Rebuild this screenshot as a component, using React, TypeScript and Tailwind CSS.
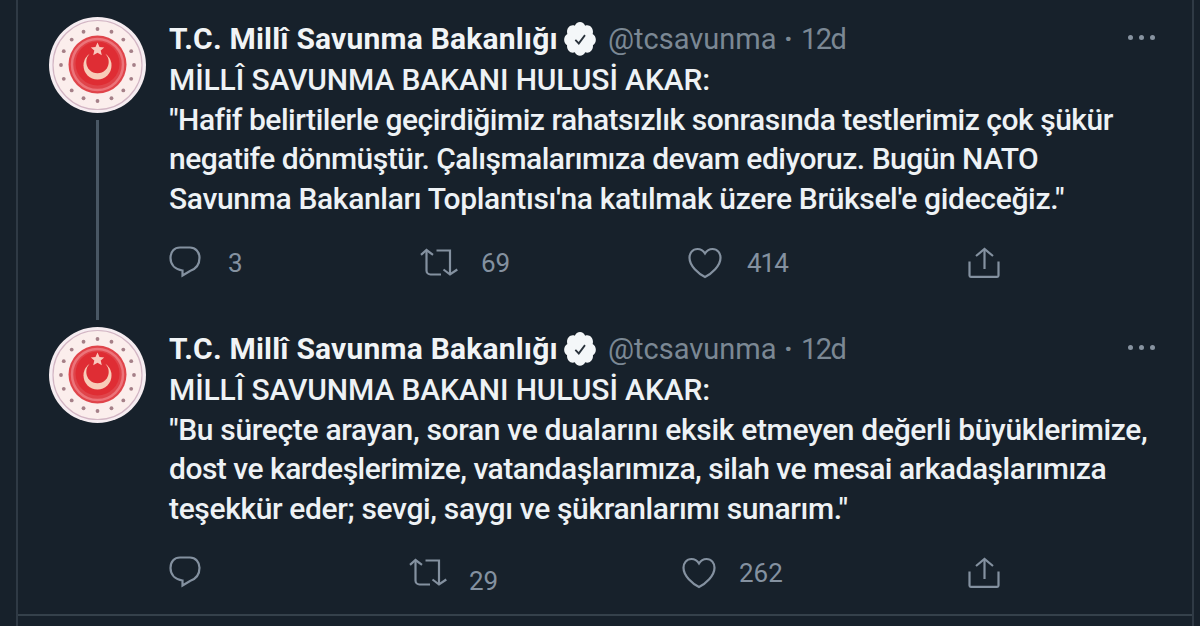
interface Line {
  text: string;
  className: string;
}

interface Tweet {
  lines: Line[];
  replies: string;
  retweets: string;
  likes: string;
  threaded: boolean;
  retweetCol: string;
  retweetCount: string;
  likeCol: string;
  likeCount: string;
}

const tweets: Tweet[] = [
  {
    lines: [
      { text: "MİLLÎ SAVUNMA BAKANI HULUSİ AKAR:", className: "tracking-[-0.11px]" },
      { text: "\"Hafif belirtilerle geçirdiğimiz rahatsızlık sonrasında testlerimiz çok şükür", className: "tracking-[-0.48px]" },
      { text: "negatife dönmüştür. Çalışmalarımıza devam ediyoruz. Bugün NATO", className: "tracking-[-0.5px]" },
      { text: "Savunma Bakanları Toplantısı'na katılmak üzere Brüksel'e gideceğiz.\"", className: "tracking-[-0.34px]" },
    ],
    replies: "3",
    retweets: "69",
    likes: "414",
    threaded: true,
    retweetCol: "w-[251px]",
    retweetCount: "ml-[22px] mt-[4px]",
    likeCol: "w-[268px]",
    likeCount: "ml-[25px] tracking-[-1px]",
  },
  {
    lines: [
      { text: "MİLLÎ SAVUNMA BAKANI HULUSİ AKAR:", className: "tracking-[-0.11px]" },
      { text: "\"Bu süreçte arayan, soran ve dualarını eksik etmeyen değerli büyüklerimize,", className: "tracking-[-0.33px]" },
      { text: "dost ve kardeşlerimize, vatandaşlarımıza, silah ve mesai arkadaşlarımıza", className: "tracking-[-0.5px]" },
      { text: "teşekkür eder; sevgi, saygı ve şükranlarımı sunarım.\"", className: "tracking-[-0.36px]" },
    ],
    replies: "",
    retweets: "29",
    likes: "262",
    threaded: false,
    retweetCol: "w-[240px]",
    retweetCount: "ml-[21px] mt-[12px]",
    likeCol: "w-[273px]",
    likeCount: "ml-[23px]",
  },
];

const STAR_COUNT = 16;

function Emblem() {
  const stars = Array.from({ length: STAR_COUNT }, (_, i) => {
    const angle = (i / STAR_COUNT) * Math.PI * 2;
    return { x: 48.5 + Math.sin(angle) * 36.5, y: 48 - Math.cos(angle) * 36 };
  });

  return (
    <svg width="97" height="96" viewBox="0 0 97 96" className="block shrink-0">
      <ellipse cx="48.5" cy="48" rx="48.5" ry="48" fill="#f6edf1" />
      <circle cx="48.5" cy="48" r="44.5" fill="#fbeeec" stroke="#d3b6c4" strokeWidth="1.2" />
      {stars.map((s, i) => (
        <circle key={i} cx={s.x} cy={s.y} r="1.9" fill="#a58088" />
      ))}
      <circle cx="48.5" cy="47.5" r="29" fill="#e0444a" />
      <circle cx="48.5" cy="47.5" r="25.5" fill="none" stroke="#ec747a" strokeWidth="2.5" />
      <circle cx="48.5" cy="46.5" r="22" fill="#df2d34" />
      {/* Crescent: light disc with a smaller red disc cut out of its top */}
      <circle cx="48.5" cy="48.5" r="14" fill="#f8cdb9" />
      <circle cx="48.5" cy="45" r="11.2" fill="#df2d34" />
      <path d="M39 30h19l-1.500 8h-16z" fill="#df2d34" />
      <path d="M48.5 25.5l2 4.4 4.7.5-3.5 3.2 1.1 4.7-4.3-2.5-4.3 2.5 1.1-4.7-3.5-3.2 4.7-.5z" fill="#f9c9bd" />
    </svg>
  );
}

function VerifiedBadge() {
  return (
    <svg width="32" height="35" viewBox="1.4 1.5 21.2 21.7" preserveAspectRatio="none" className="block">
      <path
        fill="#f4f7f9"
        d="M22.5 12.5c0-1.58-.875-2.95-2.148-3.6.154-.435.238-.905.238-1.4 0-2.21-1.71-3.998-3.818-3.998-.47 0-.92.084-1.336.25C14.818 2.415 13.51 1.5 12 1.5s-2.816.917-3.437 2.25c-.415-.165-.866-.25-1.336-.25-2.11 0-3.818 1.79-3.818 4 0 .494.083.964.237 1.4-1.272.65-2.147 2.018-2.147 3.6 0 1.495.782 2.798 1.942 3.486-.02.17-.032.34-.032.514 0 2.21 1.708 4 3.818 4 .47 0 .92-.086 1.335-.25.62 1.334 1.926 2.25 3.437 2.25 1.512 0 2.818-.916 3.437-2.25.415.163.865.248 1.336.248 2.11 0 3.818-1.79 3.818-4 0-.174-.012-.344-.033-.513 1.158-.687 1.943-1.99 1.943-3.484z"
      />
      <path d="M8.9 12.6l2.3 2.2 4.1-5.2" fill="none" stroke="#29323b" strokeWidth="1.2" />
    </svg>
  );
}

function ReplyIcon() {
  return (
    <svg width="32" height="32" viewBox="0 0 32 32" fill="none" stroke="currentColor" strokeWidth="2.2" className="block">
      <path d="M11 1.5h10c5.5 0 9.5 4.500 9.500 10.300 0 6.700-3.500 11.200-9.500 13.200l-7.500 4.500V24.500C6.500 23.500 1.500 19 1.500 12 1.500 5.500 5.500 1.500 11 1.500z" />
    </svg>
  );
}

function RetweetIcon() {
  return (
    <svg width="39" height="32" viewBox="0 0 39 32" fill="none" stroke="currentColor" strokeWidth="2.2" className="block">
      <path d="M1 8.8L6.5 4 13 8.8" />
      <path d="M6.5 5v19.500a4 4 0 0 0 4 4H21" />
      <path d="M16.500 4.500H30V28" />
      <path d="M23.500 23.500l6.500 5 7.300-5" />
    </svg>
  );
}

function HeartIcon() {
  return (
    <svg width="34" height="32" viewBox="0 0 34 32" fill="none" stroke="currentColor" strokeWidth="2.2" className="mt-px block">
      <path d="M17 6.500C15 3.300 12.500 2 9.500 2 4.500 2 1.500 6 1.500 10.800c0 8.200 9 16 15.500 19.200 6.500-3.200 15.500-11 15.500-19.200C32.500 6 29.500 2 24.500 2c-3 0-5.500 1.300-7.500 4.500z" />
    </svg>
  );
}

function ShareIcon() {
  return (
    <svg width="32" height="32" viewBox="0 0 32 32" fill="none" stroke="currentColor" strokeWidth="2.2" className="mt-px block">
      <path d="M8 9l8.500-7L25 9" />
      <path d="M16.500 2.500V22" />
      <path d="M1.500 14.500v14c0 .8.500 1.300 1.300 1.300h26.400c.8 0 1.300-.5 1.300-1.300v-14" />
    </svg>
  );
}

function TweetRow({ tweet }: { tweet: Tweet }) {
  return (
    <article className="flex h-[310px] pl-[31px]">
      <div className="flex w-[97px] shrink-0 flex-col items-center">
        <Emblem />
        {tweet.threaded && <div className="mt-[7px] h-[200px] w-[3px] bg-[#495764]" />}
      </div>

      <div className="ml-[23px] min-w-0 flex-1">
        {/* Author line */}
        <div className="flex h-[40px] items-center pt-[4px] whitespace-nowrap">
          <span className="w-[395px] text-[30px] leading-[40px] font-bold text-[#f1f4f6] tracking-[0.2px]">
            T.C. Millî Savunma Bakanlığı
          </span>
          <VerifiedBadge />
          <span className="ml-[12px] w-[176px] text-[29px] leading-[40px] text-[#7b8894]">@tcsavunma</span>
          <span className="w-[17px] text-[29px] leading-[40px] font-bold text-[#7b8894]">·</span>
          <span className="text-[29px] leading-[40px] text-[#7b8894] tracking-[-1.5px]">12d</span>
          <div className="mt-[-4px] mr-[37px] ml-auto flex gap-[6px]">
            <span className="size-[5px] rounded-full bg-[#8793a0]" />
            <span className="size-[5px] rounded-full bg-[#8793a0]" />
            <span className="size-[5px] rounded-full bg-[#8793a0]" />
          </div>
        </div>

        {/* Body */}
        <div className="pt-[3px] text-[30px] leading-[39.7px] font-medium text-[#eef2f5]">
          {tweet.lines.map((line) => (
            <div key={line.text} className="whitespace-nowrap">
              <span className={line.className}>{line.text}</span>
            </div>
          ))}
        </div>

        {/* Actions */}
        <div className="mt-[27px] flex h-[38px] text-[26px] leading-[27px] text-[#8491a0]">
          <div className={`flex shrink-0 ${tweet.retweetCol}`}>
            <ReplyIcon />
            <span className="mt-[4px] ml-[27px]">{tweet.replies}</span>
          </div>
          <div className={`flex shrink-0 ${tweet.likeCol}`}>
            <RetweetIcon />
            <span className={tweet.retweetCount}>{tweet.retweets}</span>
          </div>
          <div className="flex flex-1">
            <HeartIcon />
            <span className={`mt-[4px] ${tweet.likeCount}`}>{tweet.likes}</span>
          </div>
          <div className="mr-[192px]">
            <ShareIcon />
          </div>
        </div>
      </div>
    </article>
  );
}

export default function App() {
  return (
    <div className="h-[626px] w-[1200px] overflow-hidden bg-[#17212b] pl-[16px] font-['Roboto',sans-serif]">
      <main className="h-full w-[1178px] border-x-2 border-[#2f3a45]">
        <div className="h-[616px] border-b-2 border-[#35414b] pt-[17px]">
          {tweets.map((tweet, i) => (
            <TweetRow key={i} tweet={tweet} />
          ))}
        </div>
      </main>
    </div>
  );
}
